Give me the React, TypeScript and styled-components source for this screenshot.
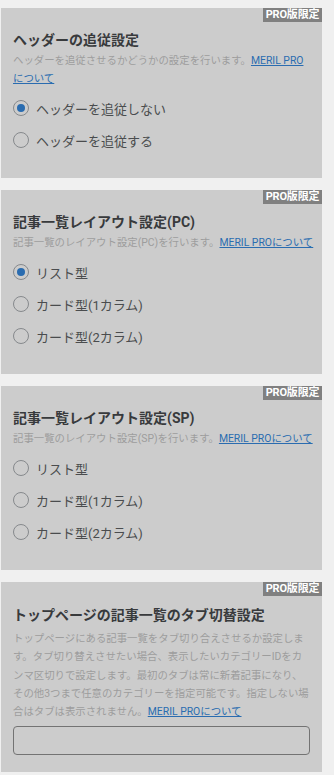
import React from "react";
import styled, { createGlobalStyle } from "styled-components";

const GlobalStyle = createGlobalStyle`
  html, body {
    margin: 0;
    padding: 0;
    background: #f0f0f0;
  }
  body {
    font-family: Roboto, "Noto Sans CJK JP", "Noto Sans", sans-serif;
  }
`;

const Page = styled.div`
  display: flex;
  flex-direction: column;
  gap: 12px;
  padding: 8px 0 0 1px;
  width: 321px;
`;

const Panel = styled.section<{ $bottom?: number }>`
  position: relative;
  background: #cccccc;
  padding: 22px 12px ${(p) => p.$bottom ?? 22}px 12px;
  display: flex;
  flex-direction: column;
`;

const Badge = styled.span`
  position: absolute;
  top: 0;
  right: 0;
  width: 59px;
  height: 14px;
  background: #808080;
  color: #ffffff;
  font-size: 11px;
  font-weight: 700;
  line-height: 14px;
  text-align: center;
  letter-spacing: -0.2px;
`;

const Title = styled.h3<{ $top?: number }>`
  margin: ${(p) => p.$top ?? 0}px 0 0 0;
  font-size: 14px;
  line-height: 20px;
  font-weight: 700;
  color: #383a3c;
`;

const Description = styled.p<{ $gap?: number; $lh?: number }>`
  margin: ${(p) => p.$gap ?? 2}px 0 0 0;
  font-size: 10.4px;
  line-height: ${(p) => p.$lh ?? 18}px;
  color: #9d9d9d;
  white-space: nowrap;
`;

const ProLink = styled.a`
  color: #2a6cb0;
  text-decoration: underline;
  cursor: pointer;
`;

const RadioGroup = styled.div`
  display: flex;
  flex-direction: column;
  margin-top: 4px;
`;

const RadioRow = styled.label`
  display: flex;
  align-items: center;
  gap: 7px;
  height: 32px;
  font-size: 13px;
  color: #4a4c4e;
  cursor: pointer;
`;

const RadioCircle = styled.span<{ $checked?: boolean }>`
  box-sizing: border-box;
  width: 16px;
  height: 16px;
  border-radius: 50%;
  border: 1px solid #86898c;
  display: flex;
  align-items: center;
  justify-content: center;
  flex-shrink: 0;

  &::after {
    content: "";
    width: 8px;
    height: 8px;
    border-radius: 50%;
    background: ${(p) => (p.$checked ? "#2a6cb0" : "transparent")};
  }
`;

const TextBox = styled.div`
  box-sizing: border-box;
  margin-top: 5px;
  height: 29px;
  width: 100%;
  border: 1px solid #737373;
  border-radius: 4px;
  background: transparent;
`;

type RadioItem = { label: string; checked?: boolean };

const RadioList: React.FC<{ items: RadioItem[] }> = ({ items }) => (
  <RadioGroup>
    {items.map((it) => (
      <RadioRow key={it.label}>
        <RadioCircle $checked={it.checked} />
        <span>{it.label}</span>
      </RadioRow>
    ))}
  </RadioGroup>
);

export default function App() {
  return (
    <>
      <GlobalStyle />
      <Page>
        <Panel>
          <Badge>PRO版限定</Badge>
          <Title>ヘッダーの追従設定</Title>
          <Description>
            ヘッダーを追従させるかどうかの設定を行います。
            <ProLink>
              MERIL PRO
              <br />
              について
            </ProLink>
          </Description>
          <RadioList
            items={[
              { label: "ヘッダーを追従しない", checked: true },
              { label: "ヘッダーを追従する" },
            ]}
          />
        </Panel>

        <Panel>
          <Badge>PRO版限定</Badge>
          <Title>記事一覧レイアウト設定(PC)</Title>
          <Description>
            記事一覧のレイアウト設定(PC)を行います。
            <ProLink>MERIL PROについて</ProLink>
          </Description>
          <RadioList
            items={[
              { label: "リスト型", checked: true },
              { label: "カード型(1カラム)" },
              { label: "カード型(2カラム)" },
            ]}
          />
        </Panel>

        <Panel>
          <Badge>PRO版限定</Badge>
          <Title>記事一覧レイアウト設定(SP)</Title>
          <Description>
            記事一覧のレイアウト設定(SP)を行います。
            <ProLink>MERIL PROについて</ProLink>
          </Description>
          <RadioList
            items={[
              { label: "リスト型" },
              { label: "カード型(1カラム)" },
              { label: "カード型(2カラム)" },
            ]}
          />
        </Panel>

        <Panel $bottom={17}>
          <Badge>PRO版限定</Badge>
          <Title $top={1}>トップページの記事一覧のタブ切替設定</Title>
          <Description $gap={5} $lh={18.3}>
            トップページにある記事一覧をタブ切り合えさせるか設定しま
            <br />
            す。タブ切り替えさせたい場合、表示したいカテゴリーIDをカ
            <br />
            ンマ区切りで設定します。最初のタブは常に新着記事になり、
            <br />
            その他3つまで任意のカテゴリーを指定可能です。指定しない場
            <br />
            合はタブは表示されません。<ProLink>MERIL PROについて</ProLink>
          </Description>
          <TextBox />
        </Panel>
      </Page>
    </>
  );
}
